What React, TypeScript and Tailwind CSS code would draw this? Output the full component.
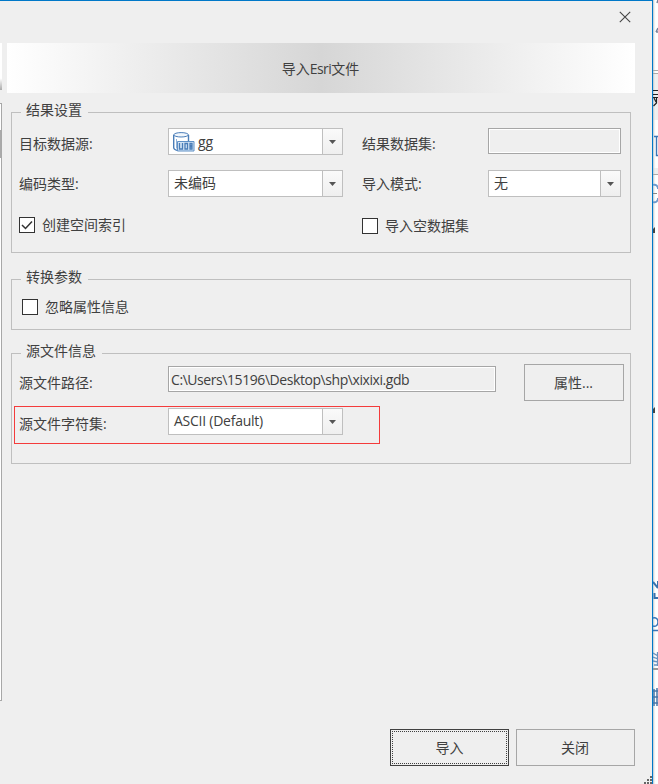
import type { ReactNode } from "react";

const Group = ({ title, className, children }: { title: string; className: string; children: ReactNode }) => (
  <section className={`relative ml-[9px] w-[620px] shrink-0 border border-[#bfbfbf] ${className}`}>
    <h2 className="absolute -top-[15px] left-[9px] h-6 bg-[#efefef] pr-[6px] pl-[5px] leading-6">{title}</h2>
    {children}
  </section>
);

const Label = ({ className, children }: { className: string; children: ReactNode }) => (
  <span className={`shrink-0 whitespace-nowrap ${className}`}>{children}</span>
);

const Select = ({ className, children }: { className: string; children: ReactNode }) => (
  <div className={`flex h-[27px] shrink-0 border border-[#bfbfbf] bg-white ${className}`}>
    <div className="flex flex-1 items-center pl-[5px] leading-5 whitespace-pre">{children}</div>
    <div className="flex w-5 items-center justify-center border-l border-[#bfbfbf] bg-linear-to-b from-[#fafafa] to-[#efefef]">
      <svg width="7" height="4" viewBox="0 0 7 4">
        <path d="M0 0h7L3.500 4z" fill="#555" />
      </svg>
    </div>
  </div>
);

const Checkbox = ({ checked, className, children }: { checked?: boolean; className: string; children: ReactNode }) => (
  <div className={`flex h-4 items-center ${className}`}>
    <span className="mr-[7px] h-4 w-4 shrink-0 border border-[#333] bg-white">
      {checked && (
        <svg width="14" height="14" viewBox="0 0 14 14">
          <path d="M2 7l3.500 3.500L12 3.500" fill="none" stroke="#333" strokeWidth="1.500" />
        </svg>
      )}
    </span>
    <span className="whitespace-nowrap">{children}</span>
  </div>
);

const DatabaseIcon = () => (
  <svg className="mr-[3px] -ml-[1px] shrink-0" width="22" height="20" viewBox="0 0 22 20" fill="none" stroke="#4a7db8">
    <path d="M.7 3v12.500c0 1.500 1.500 2.500 4 3" strokeWidth="1.400" />
    <path d="M15.500 3v6" strokeWidth="1.400" />
    <ellipse cx="8.100" cy="2.800" rx="7.300" ry="2.200" fill="#f0f6fc" />
    <path d="M3.500 7v9.500" stroke="#8fb2da" />
    <path d="M4.500 9.500h16.500v9.500H4.500z" fill="#d3e3f4" stroke="#5f90c6" />
    <path d="M6.500 11v6h3v-6M12 11.500h2.500v5.500H12zM17 11.500h2v2h-2zM17 15h2v2h-2z" strokeWidth="1.300" />
  </svg>
);

const LeftEdge = () => (
  <div className="w-[2px] shrink-0">
    <div className="mt-[42px] h-[47px] bg-linear-to-b from-white from-75% to-[#aaa]" />
    <div className="mt-[13px] h-[598px] border-t border-r border-b border-[#a8a8a8] bg-white">
      <div className="mt-[26px] h-7 bg-[#aaa]" />
    </div>
  </div>
);

const RightEdge = () => (
  <svg className="shrink-0" width="5" height="784" viewBox="0 0 5 784" fill="none">
    <defs>
      <linearGradient id="shade">
        <stop stopColor="#b9c1c7" />
        <stop offset="1" stopColor="#fff" stopOpacity="0" />
      </linearGradient>
    </defs>
    <path fill="#fff" d="M0 0h5v784H0z" />
    <path fill="#efefef" d="M0 74h5v46H0zM0 168h5v6H0z" />
    <path fill="url(#shade)" d="M0 0h3v784H0z" />
    <path d="M5 0l-1 3M5 28l-2 4M3 32h2" stroke="#77829a" strokeWidth="1.500" />
    <path d="M0 70.500h5M0 73.500h5M0 174.500h5" stroke="#aaa" />
    <path d="M0 90.500h5M0 94.500h5M0 97.500h5M1 98l2 4M3.500 97v6l-3 3" stroke="#222" strokeWidth="1.200" />
    <path d="M1 136.500h4M3.500 137v18.500H5" stroke="#3c76b5" strokeWidth="1.400" />
    <path d="M0 185c3-1 5 1 5 4M0 202c3 1 5-1 5-4" stroke="#6f9acb" strokeWidth="1.800" />
    <path d="M0 193.500h4" stroke="#888" />
    <path d="M2 227v6H0v-4zM2 407v6H0v-4z" fill="#444" />
    <path d="M0 582l5 6M5 581v6M1.500 593v5H5" stroke="#3c71ab" strokeWidth="2" />
    <path d="M0 618c3-1 5 1 5 4s-2 5-5 4M0 630.500h5" stroke="#3c76b5" strokeWidth="1.500" />
    <path d="M0 653l5 3M0 657l5 2M0 661l5 1M1 665h4M4.500 652v14" stroke="#6b92bd" strokeWidth="1.300" />
    <path d="M0 669h5" stroke="#999" strokeWidth="2" />
    <path d="M1 689v17M4 688v18M0 691h5M0 697h5M0 703h5" stroke="#4b78a8" strokeWidth="1.500" />
  </svg>
);

export default function App() {
  return (
    <div className="flex h-[784px] w-[658px] overflow-hidden bg-[#efefef] font-['Open_Sans','Noto_Sans_CJK_SC',sans-serif] text-[14px] leading-5 text-[#404040]">
      <div className="relative flex w-[653px] shrink-0 border-t border-r border-[#0078c8]">
        <LeftEdge />
        <main className="flex min-w-0 flex-1 flex-col">
          <header className="flex h-[42px] shrink-0 justify-end pt-[10px] pr-[21px]">
            <svg width="12" height="12" viewBox="0 0 12 12">
              <path d="M.8.800l10.400 10.400M11.200.800L.8 11.200" stroke="#444" strokeWidth="1.100" />
            </svg>
          </header>
          <h1 className="ml-[5px] flex h-[50px] w-[628px] shrink-0 items-center justify-center bg-linear-to-r from-white via-[#d6d6d6] to-white pt-[2px] pr-px">
            导入<span className="tracking-[-0.6px]">Esri</span>文件
          </h1>

          <Group title="结果设置" className="mt-[19px] h-[141px]">
            <div className="mt-[15px] flex h-[27px] pl-[7px]">
              <Label className="w-[149px] leading-8">目标数据源:</Label>
              <Select className="w-[175px]">
                <DatabaseIcon />
                gg
              </Select>
              <Label className="ml-[19px] w-[126px] leading-8">结果数据集:</Label>
              <div className="h-[26px] w-[133px] border border-[#a6a6a6]">
                <div className="h-full border border-white" />
              </div>
            </div>
            <div className="mt-[15px] flex h-[27px] pl-[7px]">
              <Label className="w-[149px] leading-7">编码类型:</Label>
              <Select className="w-[175px]"><span className="pb-[2px]">未编码</span></Select>
              <Label className="ml-[19px] w-[126px] leading-7">导入模式:</Label>
              <Select className="w-[133px]"><span className="pb-[2px]">无</span></Select>
            </div>
            <div className="mt-[20px] flex pl-[7px]">
              <Checkbox checked className="w-[343px]">创建空间索引</Checkbox>
              <Checkbox className="mt-px">导入空数据集</Checkbox>
            </div>
          </Group>

          <Group title="转换参数" className="mt-[26px] h-[51px]">
            <Checkbox className="mt-[19px] ml-[10px]">忽略属性信息</Checkbox>
          </Group>

          <Group title="源文件信息" className="mt-[23px] h-[111px]">
            <div className="mt-[10px] flex h-[37px] pl-[7px]">
              <Label className="mt-[3px] w-[149px] leading-8">源文件路径:</Label>
              <div className="mt-[2px] h-[26px] w-[328px] border border-[#a6a6a6]">
                <div className="h-full border border-white pl-px leading-[23px] tracking-[-0.43px]">
                  C:\Users\15196\Desktop\shp\xixixi.gdb
                </div>
              </div>
              <button className="ml-[28px] h-[37px] w-[100px] border border-[#a6a6a6] pr-px">属性...</button>
            </div>
            <div className="mt-[5px] ml-[2px] flex h-[38px] w-[366px] border border-[#f43b3b] pt-px pl-1">
              <Label className="w-[149px] leading-8">源文件字符集:</Label>
              <Select className="w-[175px]">
                <span className="pb-px tracking-[-0.25px]">ASCII (Default)</span>
              </Select>
            </div>
          </Group>

          <footer className="mt-auto mr-[17px] mb-[18px] flex justify-end gap-[7px]">
            <button className="h-[37px] w-[119px] border border-[#404040] p-px">
              <span className="flex h-full items-center justify-center border border-dotted border-[#404040]">导入</span>
            </button>
            <button className="h-[37px] w-[119px] border border-[#a6a6a6] pr-px">关闭</button>
          </footer>
        </main>
        <svg className="absolute right-0 bottom-0" width="8" height="8" viewBox="0 0 8 8" fill="#666">
          <path d="M6 0h2v2H6zM3 3h2v2H3zM6 3h2v2H6zM0 6h2v2H0zM3 6h2v2H3zM6 6h2v2H6z" />
        </svg>
      </div>
      <RightEdge />
    </div>
  );
}
